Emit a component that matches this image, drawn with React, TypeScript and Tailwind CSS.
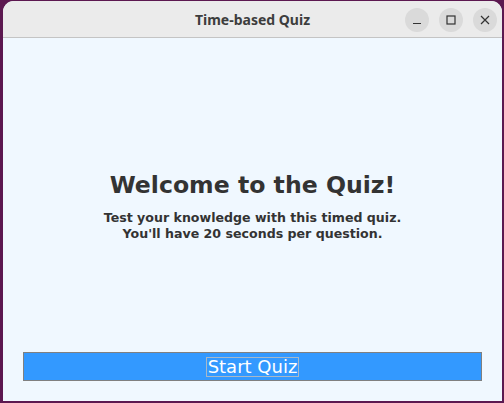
import React from "react";

export default function App() {
  return (
    <div className="w-[504px] h-[403px] bg-[#5c1850] overflow-hidden pt-[1px] pl-[3px]" style={{ fontFamily: '"DejaVu Sans", sans-serif' }}>
      <div className="w-[499px] h-[400px] rounded-t-[11px] overflow-hidden flex flex-col bg-[#f0f8ff]">
        <div className="h-[37px] shrink-0 bg-[#ebebeb] border-b border-[#c4c4c4] relative flex items-center justify-center">
          <span className="text-[14px] font-bold text-[#3d3d3d] mt-[1px]" style={{ fontFamily: '"Noto Sans", "DejaVu Sans", sans-serif' }}>Time-based Quiz</span>
          <div className="absolute right-[5px] top-[7px] flex gap-[10px]">
            <div className="w-[24px] h-[24px] rounded-full bg-[#dadada] flex items-center justify-center">
              <svg width="10" height="10" viewBox="0 0 10 10"><path d="M1 8.5H9" stroke="#333" strokeWidth="1.2" /></svg>
            </div>
            <div className="w-[24px] h-[24px] rounded-full bg-[#dadada] flex items-center justify-center">
              <svg width="10" height="10" viewBox="0 0 10 10"><rect x="1" y="1" width="8" height="8" fill="none" stroke="#333" strokeWidth="1.2" /></svg>
            </div>
            <div className="w-[24px] h-[24px] rounded-full bg-[#dadada] flex items-center justify-center">
              <svg width="10" height="10" viewBox="0 0 10 10"><path d="M1 1L9 9M9 1L1 9" stroke="#333" strokeWidth="1.2" /></svg>
            </div>
          </div>
        </div>
        <div className="flex-1 flex flex-col">
          <div className="flex-1 flex flex-col items-center justify-center pt-[21px] text-[#333333]">
            <div className="text-[23.6px] font-bold leading-[30px]">Welcome to the Quiz!</div>
            <div className="mt-[10px] text-[12.6px] font-bold leading-[16px] text-center">
              <div>Test your knowledge with this timed quiz.</div>
              <div>You'll have 20 seconds per question.</div>
            </div>
          </div>
          <div className="px-[20px] pb-[20px]">
            <button className="w-full h-[29px] bg-[#3399ff] border border-[#808080] flex items-center justify-center">
              <span className="text-white text-[18px] leading-[18px] px-[1px] border border-[#a8b8c8]">Start Quiz</span>
            </button>
          </div>
        </div>
      </div>
    </div>
  );
}
